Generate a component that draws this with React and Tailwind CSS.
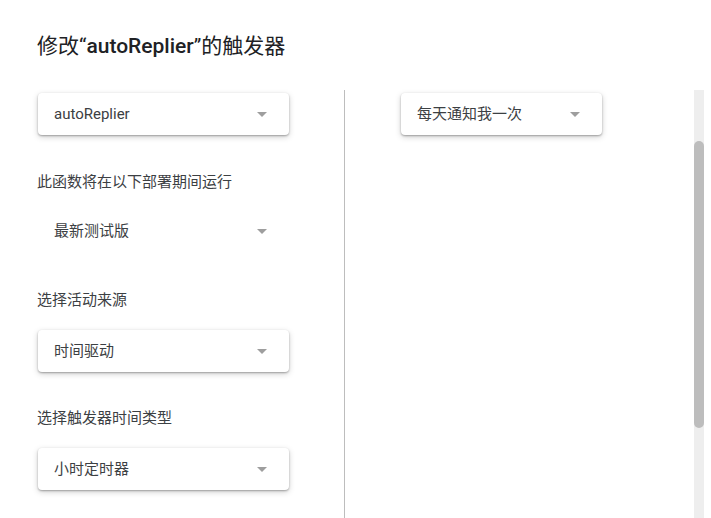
import React from 'react';

const font = { fontFamily: 'Roboto, "Noto Sans CJK SC", sans-serif' };

const Arrow = () => (
    <svg width="10" height="5" viewBox="0 0 10 5" className="shrink-0">
        <path d="M0 0 L10 0 L5 5 Z" fill="#9e9e9e" />
    </svg>
);

const Select = ({ value, width = 'w-[251px]', flat = false }) => (
    <div
        className={`${width} h-[42px] flex items-center justify-between pl-4 pr-[22px] bg-white rounded-[4px] text-[15px] text-[#3c4043] ${
            flat ? '' : 'shadow-[0_1px_2px_rgba(0,0,0,0.3),0_2px_6px_rgba(0,0,0,0.18)]'
        }`}
    >
        <span>{value}</span>
        <Arrow />
    </div>
);

const Label = ({ children, className }) => (
    <div className={`h-5 leading-5 text-[15px] text-[#3c4043] ${className}`}>{children}</div>
);

export default function App() {
    return (
        <div className="w-[711px] h-[518px] bg-white overflow-hidden flex flex-col" style={font}>
            {/* Title */}
            <h1 className="pl-[37px] pt-[34px] h-[90px] text-[21px] leading-6 text-[#202124]">
                修改“<span className="font-medium">autoReplier</span>”的触发器
            </h1>

            <div className="flex flex-1">
                {/* Left column */}
                <div className="w-[344px] pl-[38px] flex flex-col">
                    <div className="mt-[3px]">
                        <Select value="autoReplier" />
                    </div>
                    <Label className="mt-[37px] -ml-px">此函数将在以下部署期间运行</Label>
                    <div className="mt-[18px]">
                        <Select value="最新测试版" flat />
                    </div>
                    <Label className="mt-[38px] -ml-px">选择活动来源</Label>
                    <div className="mt-5">
                        <Select value="时间驱动" />
                    </div>
                    <Label className="mt-9 -ml-px">选择触发器时间类型</Label>
                    <div className="mt-5">
                        <Select value="小时定时器" />
                    </div>
                </div>

                {/* Divider */}
                <div className="w-px bg-[#bdbdbd]" />

                {/* Right column */}
                <div className="flex-1 pl-[56px]">
                    <div className="mt-[3px]">
                        <Select value="每天通知我一次" width="w-[201px]" />
                    </div>
                </div>

                {/* Scrollbar */}
                <div className="w-[10px] bg-[#eeeeee]">
                    <div className="mt-[51px] h-[287px] rounded-[5px] bg-[#bdbdbd]" />
                </div>
                <div className="w-[7px]" />
            </div>
        </div>
    );
}
